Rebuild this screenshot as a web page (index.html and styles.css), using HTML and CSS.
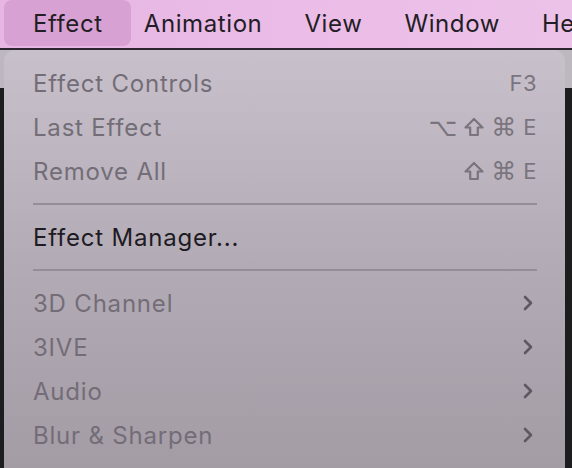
FILE: index.html
```html
<!DOCTYPE html>
<html>
<head>
<meta charset="utf-8">
<link rel="stylesheet" href="styles.css">
</head>
<body>
<nav class="menubar">
  <span class="mb-item active">Effect</span>
  <span class="mb-item">Animation</span>
  <span class="mb-item">View</span>
  <span class="mb-item">Window</span>
  <span class="mb-item">Help</span>
</nav>
<div class="workspace">
  <div class="menu">
    <div class="row disabled"><span class="label">Effect Controls</span><span class="key">F3</span></div>
    <div class="row disabled"><span class="label">Last Effect</span><span class="key"><span class="sym">⌥</span><svg class="shift" viewBox="0 0 20 20" role="img" aria-label="Shift"><path d="M10 2 L18.5 10.5 L13.8 10.5 L13.8 18 L6.2 18 L6.2 10.5 L1.5 10.5 Z"/></svg><span class="sym">⌘</span>E</span></div>
    <div class="row disabled"><span class="label">Remove All</span><span class="key"><svg class="shift" viewBox="0 0 20 20" role="img" aria-label="Shift"><path d="M10 2 L18.5 10.5 L13.8 10.5 L13.8 18 L6.2 18 L6.2 10.5 L1.5 10.5 Z"/></svg><span class="sym">⌘</span>E</span></div>
    <div class="sep"></div>
    <div class="row"><span class="label">Effect Manager...</span></div>
    <div class="sep"></div>
    <div class="row disabled"><span class="label">3D Channel</span><svg class="chev" viewBox="0 0 10 16"><path d="M2 2 L8 8 L2 14"/></svg></div>
    <div class="row disabled"><span class="label">3IVE</span><svg class="chev" viewBox="0 0 10 16"><path d="M2 2 L8 8 L2 14"/></svg></div>
    <div class="row disabled"><span class="label">Audio</span><svg class="chev" viewBox="0 0 10 16"><path d="M2 2 L8 8 L2 14"/></svg></div>
    <div class="row disabled"><span class="label">Blur &amp; Sharpen</span><svg class="chev" viewBox="0 0 10 16"><path d="M2 2 L8 8 L2 14"/></svg></div>
  </div>
</div>
</body>
</html>
```
FILE: styles.css
```css
html, body {
  margin: 0;
  padding: 0;
  height: 100%;
  overflow: hidden;
  background: #1d1c1e;
  font-family: Inter, "Noto Sans", "Liberation Sans", sans-serif;
}

.menubar {
  height: 48px;
  display: flex;
  align-items: flex-start;
  padding-left: 12px;
  background: linear-gradient(90deg, #e7b6e3 0%, #ebbde7 60%, #ecc2e8 100%);
  border-bottom: 2px solid #2c2630;
  white-space: nowrap;
  overflow: hidden;
}

.mb-item {
  height: 46px;
  line-height: 47px;
  padding: 0 21px;
  font-size: 24px;
  letter-spacing: 0.6px;
  color: #231d25;
  flex-shrink: 0;
}

.mb-item.active {
  margin: 0 -8px;
  padding: 0 28px 0 29px;
  background: #d8a1d4;
  border-radius: 8px;
}

.workspace {
  height: calc(100% - 50px);
  padding: 0 7px 0 4px;
  background: linear-gradient(180deg, #bdb8c0 0, #bdb8c0 38px, #1d1c1e 38px);
}

.menu {
  height: 100%;
  box-sizing: border-box;
  padding: 11px 28px 0 29px;
  border-radius: 11px 11px 0 0;
  background: linear-gradient(180deg, #c8c1cc 0%, #b3acb6 50%, #a39ca5 100%);
  display: flex;
  flex-direction: column;
}

.row {
  height: 44px;
  display: flex;
  align-items: center;
  justify-content: space-between;
  font-size: 24px;
  letter-spacing: 0.8px;
  color: #1f1b22;
}

.row.disabled {
  color: #736d77;
}

.key {
  font-size: 22px;
  letter-spacing: 0.5px;
  display: flex;
  align-items: center;
  gap: 7px;
  color: #7a747e;
}

.sym {
  font-family: "DejaVu Sans", sans-serif;
  font-size: 25px;
  letter-spacing: 0;
}

.shift {
  width: 20px;
  height: 20px;
  fill: none;
  stroke: #7a747e;
  stroke-width: 2.2;
  stroke-linejoin: round;
}

.sep {
  height: 22px;
  display: flex;
  align-items: center;
}

.sep::before {
  content: "";
  display: block;
  width: 100%;
  height: 2px;
  background: #948e97;
}

.chev {
  width: 10px;
  height: 16px;
  margin-right: 4px;
  fill: none;
  stroke: #5d5861;
  stroke-width: 2.6;
  stroke-linecap: round;
  stroke-linejoin: round;
}
```
